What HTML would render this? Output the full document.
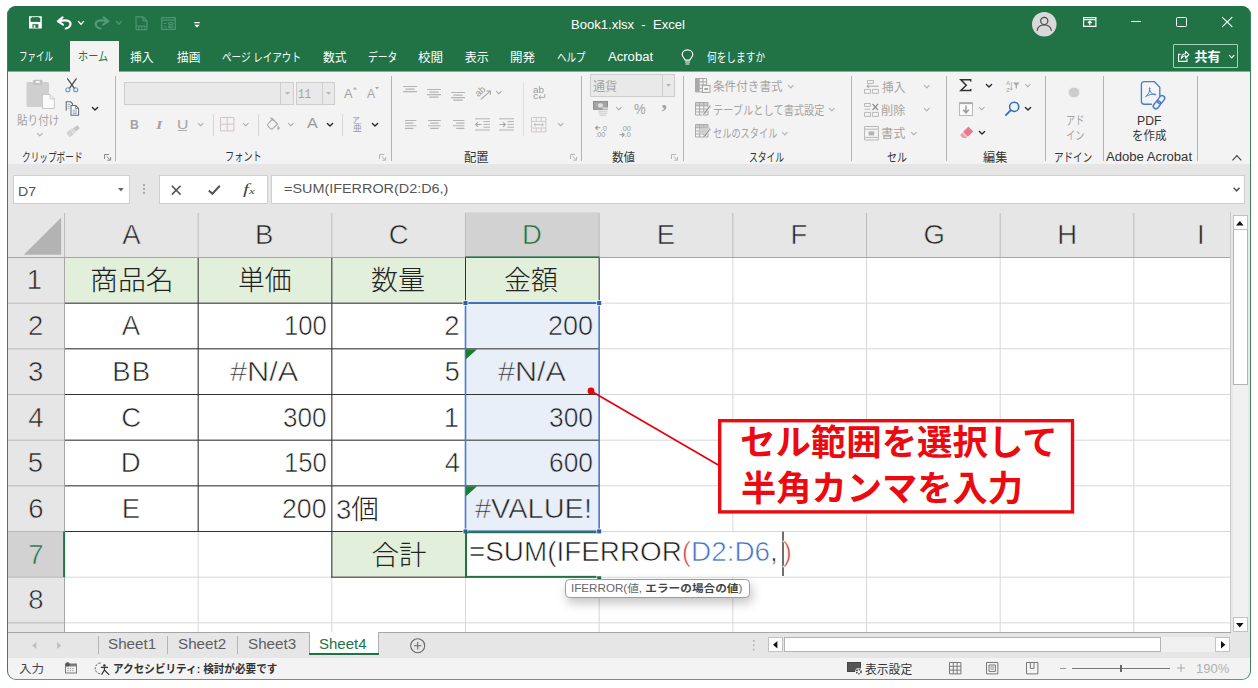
<!DOCTYPE html>
<html lang="ja">
<head>
<meta charset="utf-8">
<title>Book1.xlsx - Excel</title>
<style>
*{box-sizing:border-box;margin:0;padding:0}
html,body{width:1258px;height:688px;overflow:hidden;background:#fff}
body{position:relative;font-family:"Liberation Sans","Noto Sans CJK JP",sans-serif;color:#222}
.a{position:absolute}
#win{position:absolute;left:7px;top:6px;width:1244px;height:674px;border-radius:9px;overflow:hidden;background:#e6e6e6}
#page{position:absolute;left:-7px;top:-6px;width:1258px;height:688px}
#frame{position:absolute;left:7px;top:6px;width:1244px;height:674px;border-radius:9px;border:1px solid #3d8060;border-top-color:#217346;border-bottom-color:#5d9a86;z-index:90}
.t{position:absolute;white-space:nowrap;transform-origin:0 50%}
svg{position:absolute;overflow:visible}
.sep{position:absolute;top:76px;width:1px;height:85px;background:#b4b4b4}
.ssep{position:absolute;top:114px;width:1px;height:22px;background:#d6d6d6}
.wb{position:absolute;background:#fff;border:1px solid #cfcfcf}
.gb{position:absolute;background:#e9e9e9;border:1px solid #cdcdcd}
</style>
</head>
<body>
<div id="win"><div id="page">
<div class="a" style="left:0;top:0;width:1258px;height:71px;background:#217346"></div><svg style="left:29.3px;top:16.2px" width="12.8" height="12.8" viewBox="0 0 13.5 13"><path d="M0.8 0.8 H12.7 V12.2 H0.8 Z" fill="none" stroke="#fff" stroke-width="1.6"/><rect x="3" y="1" width="7.5" height="4.6" fill="#217346"/><rect x="0.8" y="6" width="11.9" height="6.2" fill="#fff"/><rect x="3.6" y="8.4" width="6.3" height="3.8" fill="#217346"/><rect x="4.8" y="9.6" width="2" height="2.6" fill="#fff"/></svg><svg style="left:56px;top:16px" width="16" height="14" viewBox="56 16 16 14"><path d="M62.6 17.4 L57.8 21.2 L63 24.6" fill="none" stroke="#fff" stroke-width="2.1" stroke-linecap="round" stroke-linejoin="round"/><path d="M58.4 21.2 C62 20.4 66.4 19.7 68.8 21.2 C71.8 23.2 70.8 27.6 65.7 28.5" fill="none" stroke="#fff" stroke-width="2.1" stroke-linecap="round"/></svg><svg style="left:78.2px;top:20.5px" width="6" height="4.2" viewBox="0 0 6 4.2"><path d="M0.4 0.4 L3 3.2 L5.6 0.4" fill="none" stroke="#fff" stroke-width="1.4" stroke-linecap="round" stroke-linejoin="round"/></svg><svg style="left:94px;top:16px" width="16" height="14" viewBox="94 16 16 14"><path d="M103.6 17.4 L108.4 21.2 L103.2 24.6" fill="none" stroke="#559a77" stroke-width="2.1" stroke-linecap="round" stroke-linejoin="round"/><path d="M107.8 21.2 C104.2 20.4 99.8 19.7 97.4 21.2 C94.4 23.2 95.4 27.6 100.5 28.5" fill="none" stroke="#559a77" stroke-width="2.1" stroke-linecap="round"/></svg><svg style="left:116.2px;top:20.5px" width="5.8" height="4.2" viewBox="0 0 5.8 4.2"><path d="M0.4 0.4 L2.9 3.2 L5.4 0.4" fill="none" stroke="#4d9470" stroke-width="1.4" stroke-linecap="round" stroke-linejoin="round"/></svg><svg style="left:134.5px;top:15.5px" width="13" height="15" viewBox="0 0 13 15"><path d="M1 13.5 V0.8 H8 L12 4.8 V13.5 M8 0.8 V4.8 H12" fill="none" stroke="#4d9470" stroke-width="1.2"/><path d="M1 10.2 H12 M1 13.6 H12 M3 11.9 H4.5 M6 11.9 H7.5 M9 11.9 H10.5" stroke="#4d9470" stroke-width="1.2"/></svg><svg style="left:161px;top:16.5px" width="15" height="13" viewBox="0 0 15 13"><path d="M0.7 0.7 H14.3 V12.3 H0.7 Z M0.7 3.2 H14.3" fill="none" stroke="#4d9470" stroke-width="1.3"/><path d="M7.5 5.6 H12 V7.4 H7.5 Z M7.5 9 H12 V10.6 H7.5 Z M2.8 6.5 H5.4 M2.8 9.8 H5.4" fill="none" stroke="#4d9470" stroke-width="1"/></svg><svg style="left:193.5px;top:22px" width="6" height="6" viewBox="0 0 6 6"><path d="M0.3 0.7 H5.7" stroke="#fff" stroke-width="1.3"/><path d="M0.3 2.8 H5.7 L3 5.6 Z" fill="#fff"/></svg><div class="t" style="left:571.46px;top:17.1px;font-size:12.5px;line-height:16px;color:#fff;transform:scaleX(1.044);">Book1.xlsx&nbsp; -&nbsp; Excel</div><svg style="left:1031.5px;top:11.5px" width="24.5" height="24.5" viewBox="0 0 24.5 24.5"><circle cx="12.25" cy="12.25" r="12.25" fill="#d9d9d9"/><circle cx="12.25" cy="8.9" r="3.6" fill="none" stroke="#4a4a4a" stroke-width="1.2"/><path d="M5.2 18.4 C5.8 14.4 8.6 13 12.25 13 C15.9 13 18.7 14.4 19.3 18.4" fill="none" stroke="#4a4a4a" stroke-width="1.2" stroke-linecap="round"/></svg><svg style="left:1083px;top:17.3px" width="13.5" height="10" viewBox="0 0 13.5 10"><path d="M0.6 0.6 H12.9 V9.4 H0.6 Z M0.6 2.6 H12.9" fill="none" stroke="#fff" stroke-width="1.2"/><path d="M6.75 8.2 V4.4 M4.9 6 L6.75 4.2 L8.6 6" fill="none" stroke="#fff" stroke-width="1.2"/></svg><div class="a" style="left:1130.8px;top:20.7px;width:10.4px;height:1.2px;background:#fff"></div><div class="a" style="left:1176px;top:17.3px;width:10.6px;height:10px;border:1.2px solid #fff;border-radius:1.5px"></div><svg style="left:1222px;top:17.3px" width="10.4" height="10" viewBox="0 0 10.4 10"><path d="M0.4 0.4 L10 9.6 M10 0.4 L0.4 9.6" stroke="#fff" stroke-width="1.2" stroke-linecap="round"/></svg><div class="a" style="left:69.5px;top:40.7px;width:49.7px;height:31.4px;background:#f3f3f3"></div><div class="t" style="left:19.28px;top:49.3px;font-size:12px;line-height:16px;color:#fff;transform:scaleX(0.711);">ファイル</div><div class="t" style="left:78.15px;top:49.3px;font-size:12px;line-height:16px;color:#217346;transform:scaleX(0.847);">ホーム</div><div class="t" style="left:130px;top:49.8px;font-size:12px;line-height:16px;color:#fff;transform:scaleX(0.983);">挿入</div><div class="t" style="left:177px;top:49.8px;font-size:12px;line-height:16px;color:#fff;transform:scaleX(0.971);">描画</div><div class="t" style="left:222.2px;top:49.8px;font-size:12px;line-height:16px;color:#fff;transform:scaleX(0.797);">ページ レイアウト</div><div class="t" style="left:322.5px;top:49.8px;font-size:12px;line-height:16px;color:#fff;transform:scaleX(0.979);">数式</div><div class="t" style="left:368.19px;top:49.8px;font-size:12px;line-height:16px;color:#fff;transform:scaleX(0.815);">データ</div><div class="t" style="left:418.4px;top:49.8px;font-size:12px;line-height:16px;color:#fff;transform:scaleX(1.043);">校閲</div><div class="t" style="left:464.8px;top:49.8px;font-size:12px;line-height:16px;color:#fff;">表示</div><div class="t" style="left:510.16px;top:49.8px;font-size:12px;line-height:16px;color:#fff;transform:scaleX(1.043);">開発</div><div class="t" style="left:556.81px;top:50.3px;font-size:12px;line-height:16px;color:#fff;transform:scaleX(0.791);">ヘルプ</div><div class="t" style="left:608px;top:49.3px;font-size:12px;line-height:16px;color:#fff;transform:scaleX(1.090);">Acrobat</div><div class="t" style="left:706.5px;top:49.8px;font-size:12px;line-height:16px;color:#fff;transform:scaleX(0.807);">何をしますか</div><svg style="left:681px;top:48.5px" width="13" height="16" viewBox="0 0 13 16"><path d="M4.2 11.2 C4.2 9.4 1.2 8.4 1.2 5.6 C1.2 2.8 3.6 0.8 6.5 0.8 C9.4 0.8 11.8 2.8 11.8 5.6 C11.8 8.4 8.8 9.4 8.8 11.2 Z M4.4 13 H8.6 M5 15 H8" fill="none" stroke="#fff" stroke-width="1.2" stroke-linecap="round" stroke-linejoin="round"/></svg><div class="a" style="left:1173.3px;top:44.4px;width:64.6px;height:23.8px;border:1.2px solid #a5d1b8;border-radius:1px"></div><svg style="left:1177.5px;top:50px" width="11.5" height="12" viewBox="0 0 11.5 12"><path d="M2.8 4.2 H0.6 V11.4 H9 V8.6" fill="none" stroke="#fff" stroke-width="1.1"/><path d="M3.4 8.4 C3.6 5.4 5.4 3.8 7.6 3.8 V1.4 L10.9 4.7 L7.6 8 V5.8 C5.8 5.8 4.4 6.6 3.4 8.4 Z" fill="none" stroke="#fff" stroke-width="1.1" stroke-linejoin="round"/></svg><div class="t" style="left:1194.4px;top:47.9px;font-size:13px;line-height:17px;color:#fff;font-weight:700;">共有</div><svg style="left:1228.7px;top:55px" width="5.4" height="3.8" viewBox="0 0 5.4 3.8"><path d="M0.4 0.4 L2.7 2.8 L5 0.4" fill="none" stroke="#fff" stroke-width="1.1" stroke-linecap="round" stroke-linejoin="round"/></svg><div class="a" style="left:0;top:71px;width:1258px;height:93.3px;background:#f3f3f3"></div><div class="a" style="left:0;top:71px;width:69.5px;height:1px;background:#7fae98"></div><div class="a" style="left:119.2px;top:71px;width:1140px;height:1px;background:#7fae98"></div><div class="sep" style="left:115.3px"></div><div class="sep" style="left:390.8px"></div><div class="sep" style="left:581px"></div><div class="sep" style="left:682.8px"></div><div class="sep" style="left:851.2px"></div><div class="sep" style="left:946px"></div><div class="sep" style="left:1045.2px"></div><div class="sep" style="left:1102.6px"></div><div class="sep" style="left:1196.6px"></div><svg style="left:26px;top:78.5px" width="29" height="30" viewBox="0 0 29 30"><rect x="0.5" y="3" width="22.5" height="25" rx="1.5" fill="#cfcfcf"/><rect x="7" y="0.8" width="9.5" height="5" rx="1.2" fill="#c2c2c2"/><rect x="9.8" y="2" width="4" height="2" fill="#f3f3f3"/><path d="M16.5 15.5 H24 L28.3 19.8 V29.5 H16.5 Z" fill="#fbfbfb" stroke="#c9c9c9" stroke-width="1"/><path d="M24 15.5 V19.8 H28.3" fill="none" stroke="#c9c9c9" stroke-width="1"/></svg><div class="t" style="left:17.42px;top:113px;font-size:12px;line-height:16px;color:#a3a3a3;transform:scaleX(0.885);">貼り付け</div><svg style="left:37.4px;top:132.6px" width="5.8" height="3.8" viewBox="0 0 5.8 3.8"><path d="M0.4 0.4 L2.9 2.8 L5.4 0.4" fill="none" stroke="#b0b0b0" stroke-width="1.1" stroke-linecap="round" stroke-linejoin="round"/></svg><svg style="left:65px;top:78px" width="14" height="15" viewBox="65 78 14 15"><path d="M67.6 78.8 L74.6 88.6 M76.2 78.8 L69.2 88.6" stroke="#4a4a4a" stroke-width="1.25" stroke-linecap="round"/><circle cx="67.9" cy="89.7" r="2" fill="none" stroke="#6e96d2" stroke-width="1.15"/><circle cx="75.7" cy="89.7" r="2" fill="none" stroke="#6e96d2" stroke-width="1.15"/></svg><svg style="left:65px;top:100.6px" width="15" height="15.4" viewBox="65 100.6 15 15.4"><path d="M66.2 110.4 V101.4 H70.6 L72.6 103.4 V104.6" fill="none" stroke="#6a6a6a" stroke-width="1.05"/><path d="M67.6 104 H70.2 M67.6 106 H69.4 M67.6 108 H69.4" stroke="#86a6d0" stroke-width="0.9"/><path d="M71 105.2 H75.8 L78.6 108 V114.8 H71 Z" fill="#fdfdfd" stroke="#6a6a6a" stroke-width="1.05"/><path d="M75.6 105.4 V108.2 H78.4" fill="none" stroke="#6a6a6a" stroke-width="0.8"/><path d="M72.6 109.8 H77 M72.6 111.6 H77 M72.6 113.2 H77" stroke="#86a6d0" stroke-width="0.9"/></svg><svg style="left:92px;top:106.5px" width="6" height="4" viewBox="0 0 6 4"><path d="M0.4 0.4 L3 3 L5.6 0.4" fill="none" stroke="#2b2b2b" stroke-width="1.4" stroke-linecap="round" stroke-linejoin="round"/></svg><svg style="left:66px;top:125px" width="14" height="12.4" viewBox="66 125 14 12.4"><g transform="rotate(-38 73 131)"><rect x="74.6" y="129" width="5.4" height="4" rx="0.6" fill="#c6c6c6"/><rect x="72.6" y="128.2" width="1.6" height="5.6" fill="#d0d0d0"/><path d="M72 128 H67.2 C66.4 129.6 66 132 66.8 134 H72 Z" fill="#d6d2d4"/></g></svg><div class="t" style="left:22.18px;top:149.6px;font-size:12px;line-height:16px;color:#333;transform:scaleX(0.721);">クリップボード</div><svg style="left:103.8px;top:153.6px" width="7.6" height="7" viewBox="0 0 7.6 7"><path d="M0.5 5 V0.5 H5.2" fill="none" stroke="#8a8a8a" stroke-width="1"/><path d="M2.6 2.4 L6.2 5.8 M6.6 3 V6.2 H3.2" fill="none" stroke="#8a8a8a" stroke-width="1"/></svg><div class="gb" style="left:124px;top:82px;width:170px;height:22.6px"></div><div class="a" style="left:280.4px;top:83px;width:1px;height:20.6px;background:#cdcdcd"></div><svg style="left:284.6px;top:92px" width="5" height="3" viewBox="0 0 5 3"><path d="M0 0 H5 L2.5 2.8 Z" fill="#b5b5b5"/></svg><div class="gb" style="left:295.8px;top:82px;width:39px;height:22.6px"></div><div class="a" style="left:321.8px;top:83px;width:1px;height:20.6px;background:#cdcdcd"></div><svg style="left:326px;top:92px" width="5" height="3" viewBox="0 0 5 3"><path d="M0 0 H5 L2.5 2.8 Z" fill="#b5b5b5"/></svg><div class="t" style="left:298.29px;top:87.1px;font-size:12px;line-height:16px;color:#a3a3a3;transform:scaleX(0.908);font-family:&quot;Liberation Mono&quot;,monospace;">11</div><div class="t" style="left:344px;top:84.9px;font-size:13.5px;line-height:18px;color:#a3a3a3;transform:scaleX(0.956);">A</div><svg style="left:352.6px;top:86.6px" width="4" height="2.6" viewBox="0 0 4 2.6"><path d="M0 2.6 L2 0 L4 2.6 Z" fill="#a9a9a9"/></svg><div class="t" style="left:367.4px;top:86.3px;font-size:12.5px;line-height:16px;color:#a3a3a3;transform:scaleX(0.975);">A</div><svg style="left:375px;top:86.6px" width="4" height="2.6" viewBox="0 0 4 2.6"><path d="M0 0 L2 2.6 L4 0 Z" fill="#a9a9a9"/></svg><div class="t" style="left:129.56px;top:116.1px;font-size:13px;line-height:17px;color:#a3a3a3;font-weight:700;transform:scaleX(0.938);">B</div><div class="t" style="left:156px;top:115.6px;font-size:13px;line-height:17px;color:#a3a3a3;font-weight:700;transform:scaleX(1.260);font-style:italic;font-family:&quot;Liberation Serif&quot;,serif;">I</div><div class="t" style="left:176.94px;top:116.7px;font-size:12.5px;line-height:16px;color:#a3a3a3;transform:scaleX(1.257);">U</div><div class="a" style="left:178px;top:130px;width:9.2px;height:1px;background:#a9a9a9"></div><svg style="left:198.4px;top:123.4px" width="5.6" height="3.8" viewBox="0 0 5.6 3.8"><path d="M0.4 0.4 L2.8 2.8 L5.2 0.4" fill="none" stroke="#b0b0b0" stroke-width="1.1" stroke-linecap="round" stroke-linejoin="round"/></svg><div class="ssep" style="left:213px"></div><svg style="left:220.3px;top:116.5px" width="14.4" height="14.4" viewBox="0 0 14.4 14.4"><path d="M0.5 0.5 H13.9 V13.9 H0.5 Z M7.2 0.5 V13.9 M0.5 7.2 H13.9" fill="none" stroke="#d0c4c8" stroke-width="1"/></svg><svg style="left:243px;top:123.4px" width="5.6" height="3.8" viewBox="0 0 5.6 3.8"><path d="M0.4 0.4 L2.8 2.8 L5.2 0.4" fill="none" stroke="#b0b0b0" stroke-width="1.1" stroke-linecap="round" stroke-linejoin="round"/></svg><div class="ssep" style="left:257.5px"></div><svg style="left:267px;top:116.5px" width="13.5" height="14" viewBox="0 0 13.5 14"><path d="M4.6 1 L10.6 7 L6 11.4 C5.2 12.2 4 12.2 3.2 11.4 L1.2 9.4 C0.4 8.6 0.4 7.4 1.2 6.6 L5.6 2.2 M3.4 0.6 L6.4 3.6" fill="none" stroke="#a9a9a9" stroke-width="1.1" stroke-linejoin="round"/><path d="M11.4 8.6 C12.2 9.8 12.8 10.6 12.8 11.4 C12.8 12.2 12.2 12.8 11.4 12.8 C10.6 12.8 10 12.2 10 11.4 C10 10.6 10.6 9.8 11.4 8.6 Z" fill="#b9b9b9"/></svg><svg style="left:288px;top:123.4px" width="5.6" height="3.8" viewBox="0 0 5.6 3.8"><path d="M0.4 0.4 L2.8 2.8 L5.2 0.4" fill="none" stroke="#b0b0b0" stroke-width="1.1" stroke-linecap="round" stroke-linejoin="round"/></svg><div class="t" style="left:306.6px;top:113px;font-size:15.5px;line-height:20px;color:#9a9a9a;transform:scaleX(1.040);">A</div><svg style="left:326.6px;top:123px" width="6" height="4" viewBox="0 0 6 4"><path d="M0.4 0.4 L3 3 L5.6 0.4" fill="none" stroke="#2b2b2b" stroke-width="1.4" stroke-linecap="round" stroke-linejoin="round"/></svg><div class="ssep" style="left:341.5px"></div><div class="t" style="left:352.47px;top:115.4px;font-size:7px;line-height:9px;color:#8f8f8f;transform:scaleX(1.133);">ア</div><div class="t" style="left:352.6px;top:122.3px;font-size:9px;line-height:12px;color:#9a9a9a;transform:scaleX(0.978);">亜</div><svg style="left:371.8px;top:123px" width="6" height="4" viewBox="0 0 6 4"><path d="M0.4 0.4 L3 3 L5.6 0.4" fill="none" stroke="#2b2b2b" stroke-width="1.4" stroke-linecap="round" stroke-linejoin="round"/></svg><div class="t" style="left:225.47px;top:149.1px;font-size:12px;line-height:16px;color:#333;transform:scaleX(0.766);">フォント</div><svg style="left:379.4px;top:153.6px" width="7.6" height="7" viewBox="0 0 7.6 7"><path d="M0.5 5 V0.5 H5.2" fill="none" stroke="#b5b5b5" stroke-width="1"/><path d="M2.6 2.4 L6.2 5.8 M6.6 3 V6.2 H3.2" fill="none" stroke="#b5b5b5" stroke-width="1"/></svg><svg style="left:403.4px;top:85.8px" width="16" height="16" viewBox="0 0 16 16"><path d="M0 0.5 H14" stroke="#b4b4b4" stroke-width="1.15"/><path d="M2.4 3.05 H11.6" stroke="#b4b4b4" stroke-width="1.15"/><path d="M0 5.6 H14" stroke="#b4b4b4" stroke-width="1.15"/></svg><svg style="left:427.4px;top:88.8px" width="16" height="16" viewBox="0 0 16 16"><path d="M0 0.5 H14" stroke="#b4b4b4" stroke-width="1.15"/><path d="M2.4 3.05 H11.6" stroke="#b4b4b4" stroke-width="1.15"/><path d="M0 5.6 H14" stroke="#b4b4b4" stroke-width="1.15"/><path d="M2.4 8.15 H11.6" stroke="#b4b4b4" stroke-width="1.15"/></svg><svg style="left:451.4px;top:91.8px" width="16" height="16" viewBox="0 0 16 16"><path d="M0 0.5 H14" stroke="#b4b4b4" stroke-width="1.15"/><path d="M2.4 3.05 H11.6" stroke="#b4b4b4" stroke-width="1.15"/><path d="M0 5.6 H14" stroke="#b4b4b4" stroke-width="1.15"/><path d="M2.4 8.15 H11.6" stroke="#b4b4b4" stroke-width="1.15"/></svg><svg style="left:474px;top:84px" width="18" height="17" viewBox="474 84 18 17"><text x="480.2" y="94.4" text-anchor="middle" font-size="9.6" fill="#9c9c9c" transform="rotate(-42 480.2 91.4)" font-family="Liberation Sans,sans-serif">ab</text><path d="M480.8 99.4 L490 91.4 M486.6 91 H490.4 V94.8" fill="none" stroke="#a4a4a4" stroke-width="1.1"/></svg><svg style="left:496px;top:90.6px" width="5.6" height="3.8" viewBox="0 0 5.6 3.8"><path d="M0.4 0.4 L2.8 2.8 L5.2 0.4" fill="none" stroke="#b0b0b0" stroke-width="1.1" stroke-linecap="round" stroke-linejoin="round"/></svg><div class="a" style="left:522.6px;top:81.6px;width:1px;height:54px;background:#dedede"></div><div class="t" style="left:532.6px;top:84.1px;font-size:9px;line-height:12px;color:#9a9a9a;transform:scaleX(1.100);">ab</div><div class="t" style="left:532.8px;top:89.9px;font-size:9px;line-height:12px;color:#9a9a9a;transform:scaleX(1.150);">c</div><svg style="left:538px;top:93.5px" width="7.4" height="6" viewBox="0 0 7.4 6"><path d="M6.8 0 V3.4 H1 M3 1.4 L0.8 3.4 L3 5.4" fill="none" stroke="#a9a9a9" stroke-width="1"/></svg><svg style="left:404.6px;top:120.1px" width="16" height="16" viewBox="0 0 16 16"><path d="M0 0.5 H11.4" stroke="#b4b4b4" stroke-width="1.15"/><path d="M0 3.1 H8.4" stroke="#b4b4b4" stroke-width="1.15"/><path d="M0 5.7 H11.4" stroke="#b4b4b4" stroke-width="1.15"/><path d="M0 8.3 H8.4" stroke="#b4b4b4" stroke-width="1.15"/></svg><svg style="left:428px;top:120.1px" width="16" height="16" viewBox="0 0 16 16"><path d="M0 0.5 H12.8" stroke="#b4b4b4" stroke-width="1.15"/><path d="M2.2 3.1 H10.6" stroke="#b4b4b4" stroke-width="1.15"/><path d="M0 5.7 H12.8" stroke="#b4b4b4" stroke-width="1.15"/><path d="M2.2 8.3 H10.6" stroke="#b4b4b4" stroke-width="1.15"/></svg><svg style="left:453px;top:120.1px" width="16" height="16" viewBox="0 0 16 16"><path d="M0 0.5 H11.4" stroke="#b4b4b4" stroke-width="1.15"/><path d="M3.2 3.1 H11.4" stroke="#b4b4b4" stroke-width="1.15"/><path d="M0 5.7 H11.4" stroke="#b4b4b4" stroke-width="1.15"/><path d="M3.2 8.3 H11.4" stroke="#b4b4b4" stroke-width="1.15"/></svg><svg style="left:475.4px;top:118px" width="15.4" height="13" viewBox="0 0 15.4 13"><path d="M0 0.8 H15 M8.4 3.6 H15 M8.4 6.4 H15 M8.4 9.2 H15 M0 12 H15" stroke="#b4b4b4" stroke-width="1"/><path d="M6.6 6.5 H0.8 M3 4.2 L0.6 6.5 L3 8.8" fill="none" stroke="#a9a9a9" stroke-width="1.1"/></svg><svg style="left:499.4px;top:118px" width="15.4" height="13" viewBox="0 0 15.4 13"><path d="M0 0.8 H15 M8.4 3.6 H15 M8.4 6.4 H15 M8.4 9.2 H15 M0 12 H15" stroke="#b4b4b4" stroke-width="1"/><path d="M0.4 6.5 H6.2 M4 4.2 L6.4 6.5 L4 8.8" fill="none" stroke="#a9a9a9" stroke-width="1.1"/></svg><svg style="left:530.6px;top:116.5px" width="15.4" height="15.4" viewBox="0 0 15.4 15.4"><path d="M0.5 0.5 H14.9 V14.9 H0.5 Z M0.5 4.4 H14.9 M0.5 11 H14.9 M5.2 0.5 V4.4 M10.2 0.5 V4.4 M5.2 11 V14.9 M10.2 11 V14.9" fill="none" stroke="#d3c7ca" stroke-width="1"/><path d="M3 7.7 H12.4 M4.6 6.2 L3 7.7 L4.6 9.2 M10.8 6.2 L12.4 7.7 L10.8 9.2" fill="none" stroke="#b9b9b9" stroke-width="1"/></svg><svg style="left:558.4px;top:123.4px" width="5.6" height="3.8" viewBox="0 0 5.6 3.8"><path d="M0.4 0.4 L2.8 2.8 L5.2 0.4" fill="none" stroke="#b0b0b0" stroke-width="1.1" stroke-linecap="round" stroke-linejoin="round"/></svg><div class="t" style="left:463.97px;top:149.6px;font-size:12px;line-height:16px;color:#333;transform:scaleX(1.026);">配置</div><svg style="left:570.2px;top:153.6px" width="7.6" height="7" viewBox="0 0 7.6 7"><path d="M0.5 5 V0.5 H5.2" fill="none" stroke="#b5b5b5" stroke-width="1"/><path d="M2.6 2.4 L6.2 5.8 M6.6 3 V6.2 H3.2" fill="none" stroke="#b5b5b5" stroke-width="1"/></svg><div class="gb" style="left:590.4px;top:74px;width:84.8px;height:22.8px"></div><div class="a" style="left:662px;top:75px;width:1px;height:20.8px;background:#cdcdcd"></div><svg style="left:666.2px;top:84.4px" width="5" height="3" viewBox="0 0 5 3"><path d="M0 0 H5 L2.5 2.8 Z" fill="#b5b5b5"/></svg><div class="t" style="left:592.6px;top:79.2px;font-size:12px;line-height:16px;color:#a3a3a3;transform:scaleX(1.009);">通貨</div><svg style="left:593px;top:101.2px" width="15.4" height="15" viewBox="0 0 15.4 15"><rect x="0.5" y="0.5" width="14" height="7.8" fill="#a4a4a4" stroke="#8e8e8e"/><ellipse cx="7.4" cy="4.4" rx="2.6" ry="2.2" fill="#dedede"/><rect x="9.4" y="6.2" width="5.6" height="2.4" fill="#cfcfcf"/><path d="M5.4 10.2 H14.4 M5.4 12.2 H14.4 M6.4 14.2 H13.4" stroke="#c9c9c9" stroke-width="1"/></svg><svg style="left:616px;top:107.4px" width="5.6" height="3.8" viewBox="0 0 5.6 3.8"><path d="M0.4 0.4 L2.8 2.8 L5.2 0.4" fill="none" stroke="#b0b0b0" stroke-width="1.1" stroke-linecap="round" stroke-linejoin="round"/></svg><div class="t" style="left:634px;top:99.6px;font-size:14.5px;line-height:19px;color:#a3a3a3;transform:scaleX(0.908);">%</div><div class="t" style="left:661.4px;top:86px;font-size:22px;line-height:29px;color:#a3a3a3;font-weight:700;font-family:&quot;Liberation Serif&quot;,serif;">,</div><svg style="left:594.6px;top:125.4px" width="13" height="12.4" viewBox="0 0 13 12.4"><path d="M5.2 2.8 H0.8 M2.6 0.8 L0.6 2.8 L2.6 4.8" fill="none" stroke="#9a9a9a" stroke-width="1.1"/><text x="5.6" y="5.6" font-size="7.4" fill="#9a9a9a" font-family="Liberation Sans,sans-serif">.0</text><text x="0.2" y="12.4" font-size="7.4" fill="#9a9a9a" font-family="Liberation Sans,sans-serif">.00</text></svg><svg style="left:619px;top:125.4px" width="13" height="12.4" viewBox="0 0 13 12.4"><text x="1.6" y="5.6" font-size="7.4" fill="#9a9a9a" font-family="Liberation Sans,sans-serif">.00</text><path d="M0.4 9.8 H5 M3.2 7.8 L5.2 9.8 L3.2 11.8" fill="none" stroke="#9a9a9a" stroke-width="1.1"/><text x="5.8" y="12.4" font-size="7.4" fill="#9a9a9a" font-family="Liberation Sans,sans-serif">.0</text></svg><div class="t" style="left:612px;top:149.6px;font-size:12px;line-height:16px;color:#333;transform:scaleX(0.954);">数値</div><svg style="left:671.4px;top:153.6px" width="7.6" height="7" viewBox="0 0 7.6 7"><path d="M0.5 5 V0.5 H5.2" fill="none" stroke="#b5b5b5" stroke-width="1"/><path d="M2.6 2.4 L6.2 5.8 M6.6 3 V6.2 H3.2" fill="none" stroke="#b5b5b5" stroke-width="1"/></svg><svg style="left:695.4px;top:78.2px" width="15.4" height="15" viewBox="0 0 15.4 15"><rect x="0.5" y="0.5" width="3.6" height="13.4" fill="#a9a9a9"/><path d="M0.5 0.5 H11.6 V13.9 H0.5 Z M0.5 3.8 H11.6 M0.5 7 H11.6 M0.5 10.4 H11.6 M4.2 0.5 V13.9 M8 0.5 V13.9" fill="none" stroke="#a9a9a9" stroke-width="1"/><rect x="7.4" y="7.4" width="7.6" height="7" fill="#f6f6f6" stroke="#a0a0a0"/><path d="M9.4 11 H13" stroke="#8a8a8a" stroke-width="1.4"/></svg><div class="t" style="left:712.73px;top:79.2px;font-size:12px;line-height:16px;color:#a3a3a3;transform:scaleX(0.968);">条件付き書式</div><svg style="left:787.6px;top:84.8px" width="5.6" height="3.8" viewBox="0 0 5.6 3.8"><path d="M0.4 0.4 L2.8 2.8 L5.2 0.4" fill="none" stroke="#b0b0b0" stroke-width="1.1" stroke-linecap="round" stroke-linejoin="round"/></svg><svg style="left:695.4px;top:102.2px" width="16" height="15" viewBox="0 0 16 15"><rect x="0.5" y="0.5" width="12.5" height="3.2" fill="#c9c9c9"/><path d="M0.5 0.5 H13 V13 H0.5 Z M0.5 3.8 H13 M0.5 7 H13 M0.5 10 H13 M4.6 0.5 V13 M8.8 0.5 V13" fill="none" stroke="#a9a9a9" stroke-width="1"/><path d="M15 2.6 L9 10 L6.4 14.4 L10.6 11.6 L16 4.2 Z" fill="#9a9a9a" stroke="#f3f3f3" stroke-width="0.7"/></svg><div class="t" style="left:712.85px;top:102.6px;font-size:12px;line-height:16px;color:#a3a3a3;transform:scaleX(0.852);">テーブルとして書式設定</div><svg style="left:829px;top:108.2px" width="5.6" height="3.8" viewBox="0 0 5.6 3.8"><path d="M0.4 0.4 L2.8 2.8 L5.2 0.4" fill="none" stroke="#b0b0b0" stroke-width="1.1" stroke-linecap="round" stroke-linejoin="round"/></svg><svg style="left:695.4px;top:124px" width="16" height="15.4" viewBox="0 0 16 15.4"><rect x="0.5" y="0.5" width="12.5" height="3.2" fill="#c9c9c9"/><path d="M0.5 0.5 H13 V13 H0.5 Z M0.5 3.8 H13 M0.5 7 H13 M0.5 10 H13 M4.6 0.5 V13 M8.8 0.5 V13" fill="none" stroke="#a9a9a9" stroke-width="1"/><rect x="4.6" y="3.8" width="8.4" height="6.2" fill="#cfcfcf"/><path d="M15 3.6 L9 11 L6 15.2 L10.6 12.6 L16 5.2 Z" fill="#9a9a9a" stroke="#f3f3f3" stroke-width="0.7"/></svg><div class="t" style="left:712.93px;top:126px;font-size:12px;line-height:16px;color:#a3a3a3;transform:scaleX(0.766);">セルのスタイル</div><svg style="left:782.2px;top:131.6px" width="5.6" height="3.8" viewBox="0 0 5.6 3.8"><path d="M0.4 0.4 L2.8 2.8 L5.2 0.4" fill="none" stroke="#b0b0b0" stroke-width="1.1" stroke-linecap="round" stroke-linejoin="round"/></svg><div class="t" style="left:748.57px;top:149.6px;font-size:12px;line-height:16px;color:#333;transform:scaleX(0.732);">スタイル</div><svg style="left:863.6px;top:79.6px" width="15" height="14" viewBox="0 0 15 14"><path d="M3.4 0.5 H9.4 V3.4 H3.4 Z M0.5 9.4 H6.4 V13.4 H0.5 Z M8.4 9.4 H14.4 V13.4 H8.4 Z" fill="none" stroke="#b9b9b9" stroke-width="1"/><path d="M14.6 6.2 H3 M5 4.4 L2.8 6.2 L5 8" fill="none" stroke="#a9a9a9" stroke-width="1"/></svg><div class="t" style="left:882.4px;top:79.6px;font-size:12px;line-height:16px;color:#a3a3a3;transform:scaleX(0.975);">挿入</div><svg style="left:923.8px;top:85.2px" width="5.6" height="3.8" viewBox="0 0 5.6 3.8"><path d="M0.4 0.4 L2.8 2.8 L5.2 0.4" fill="none" stroke="#b0b0b0" stroke-width="1.1" stroke-linecap="round" stroke-linejoin="round"/></svg><svg style="left:863.6px;top:102.6px" width="15" height="14" viewBox="0 0 15 14"><path d="M0.5 0.5 H6.4 V3.4 H0.5 Z M0.5 9.4 H6.4 V13.4 H0.5 Z M8.4 9.4 H14.4 V13.4 H8.4 Z M0.5 6.2 H6.4" fill="none" stroke="#b9b9b9" stroke-width="1"/><path d="M8.6 1 L14 7 M14 1 L8.6 7" stroke="#8f8f8f" stroke-width="1.2"/></svg><div class="t" style="left:881.38px;top:102.6px;font-size:12px;line-height:16px;color:#a3a3a3;transform:scaleX(1.017);">削除</div><svg style="left:923.8px;top:108.2px" width="5.6" height="3.8" viewBox="0 0 5.6 3.8"><path d="M0.4 0.4 L2.8 2.8 L5.2 0.4" fill="none" stroke="#b0b0b0" stroke-width="1.1" stroke-linecap="round" stroke-linejoin="round"/></svg><svg style="left:863.6px;top:125.6px" width="15" height="14.6" viewBox="0 0 15 14.6"><path d="M0.5 0.5 H14.4 M0.5 14 H14.4 M0.5 3.2 H14.4 V11.4 H0.5 Z M0.5 0.5 V3 M14.4 0.5 V3 M0.5 11.6 V14 M14.4 11.6 V14" fill="none" stroke="#b9b9b9" stroke-width="1"/><rect x="4.6" y="5.4" width="5.6" height="4" fill="#b3b3b3"/></svg><div class="t" style="left:881.38px;top:126px;font-size:12px;line-height:16px;color:#a3a3a3;transform:scaleX(1.017);">書式</div><svg style="left:910.8px;top:131.6px" width="5.6" height="3.8" viewBox="0 0 5.6 3.8"><path d="M0.4 0.4 L2.8 2.8 L5.2 0.4" fill="none" stroke="#b0b0b0" stroke-width="1.1" stroke-linecap="round" stroke-linejoin="round"/></svg><div class="t" style="left:887.47px;top:149.6px;font-size:12px;line-height:16px;color:#333;transform:scaleX(0.830);">セル</div><svg style="left:960px;top:79.2px" width="11.6" height="12.4" viewBox="0 0 13 13.6"><path d="M12 2.6 V0.8 H1 L7 6.8 L1 12.8 H12 V11" fill="none" stroke="#333" stroke-width="1.7" stroke-linejoin="miter"/></svg><svg style="left:985.6px;top:84.4px" width="6" height="4" viewBox="0 0 6 4"><path d="M0.4 0.4 L3 3 L5.6 0.4" fill="none" stroke="#2b2b2b" stroke-width="1.4" stroke-linecap="round" stroke-linejoin="round"/></svg><svg style="left:1005.6px;top:80px" width="14" height="12" viewBox="0 0 14 12"><text x="0" y="5.4" font-size="6" fill="#a3a3a3" font-family="Liberation Sans,sans-serif">A</text><text x="0.2" y="11.8" font-size="6" fill="#a3a3a3" font-family="Liberation Sans,sans-serif">Z</text><path d="M5.4 2.2 V10 M4.2 8.6 L5.4 10.2 L6.6 8.6" fill="none" stroke="#a9a9a9" stroke-width="0.8"/><path d="M7 2.4 H13.6 L11 5.6 V8.8 L9.6 8 V5.6 Z" fill="#a9a9a9"/></svg><svg style="left:1025px;top:84.4px" width="5.6" height="3.8" viewBox="0 0 5.6 3.8"><path d="M0.4 0.4 L2.8 2.8 L5.2 0.4" fill="none" stroke="#b0b0b0" stroke-width="1.1" stroke-linecap="round" stroke-linejoin="round"/></svg><svg style="left:958.8px;top:102px" width="14" height="14" viewBox="0 0 14 14"><rect x="0.5" y="0.5" width="13" height="13" fill="#fafafa" stroke="#b9b9b9"/><rect x="0.5" y="0.5" width="13" height="1.6" fill="#a9a9a9"/><path d="M7 3.6 V10.6 M4.2 7.8 L7 10.8 L9.8 7.8" fill="none" stroke="#a09aa0" stroke-width="1.5"/></svg><svg style="left:978.8px;top:107.4px" width="5.6" height="3.8" viewBox="0 0 5.6 3.8"><path d="M0.4 0.4 L2.8 2.8 L5.2 0.4" fill="none" stroke="#b0b0b0" stroke-width="1.1" stroke-linecap="round" stroke-linejoin="round"/></svg><svg style="left:1005px;top:101.4px" width="15" height="15" viewBox="0 0 15 15"><circle cx="9.2" cy="5.8" r="4.6" fill="none" stroke="#2f6fc0" stroke-width="1.5"/><path d="M5.8 9.2 L0.9 14.1" stroke="#2f6fc0" stroke-width="1.8" stroke-linecap="round"/></svg><svg style="left:1025px;top:107.4px" width="6" height="4" viewBox="0 0 6 4"><path d="M0.4 0.4 L3 3 L5.6 0.4" fill="none" stroke="#2b2b2b" stroke-width="1.4" stroke-linecap="round" stroke-linejoin="round"/></svg><svg style="left:959.6px;top:125.6px" width="14" height="12.4" viewBox="0 0 14 12.4"><path d="M8.4 0.6 L13.2 5.4 L7.8 10.8 L3 6 Z" fill="#e9788a"/><path d="M2.4 6.6 L7.2 11.4 L6.4 12 H2.8 L0.6 9.8 C0.2 9.4 0.2 8.8 0.6 8.4 Z" fill="#f0a0ac"/></svg><svg style="left:978.8px;top:130.6px" width="6" height="4" viewBox="0 0 6 4"><path d="M0.4 0.4 L3 3 L5.6 0.4" fill="none" stroke="#2b2b2b" stroke-width="1.4" stroke-linecap="round" stroke-linejoin="round"/></svg><div class="t" style="left:983px;top:149.6px;font-size:12px;line-height:16px;color:#333;transform:scaleX(1.012);">編集</div><div class="a" style="left:1069.2px;top:87.6px;width:9.6px;height:9.6px;border-radius:50%;background:#cbcbcb;box-shadow:0 0 2px #cbcbcb"></div><div class="t" style="left:1065.94px;top:113px;font-size:12px;line-height:16px;color:#a3a3a3;transform:scaleX(0.764);">アド</div><div class="t" style="left:1065.94px;top:127.6px;font-size:12px;line-height:16px;color:#a3a3a3;transform:scaleX(0.764);">イン</div><div class="t" style="left:1054.2px;top:149.6px;font-size:12px;line-height:16px;color:#333;transform:scaleX(0.796);">アドイン</div><svg style="left:1138px;top:79px" width="32" height="32" viewBox="1138 79 32 32"><path d="M1159.8 96.4 V87.2 L1154.2 81.6 H1144.4 C1142.6 81.6 1141.4 82.8 1141.4 84.6 V101.2 C1141.4 103 1142.6 104.2 1144.4 104.2 H1151.4" fill="none" stroke="#4a7cd0" stroke-width="1.35" stroke-linejoin="round" stroke-linecap="round"/><path d="M1145.6 96.6 C1148 95 1149.8 91.6 1150 88.4 C1150 87.4 1149 87.4 1149.2 88.6 C1149.6 91.6 1152 94.4 1155.2 95 C1156.2 95.2 1156.2 94 1155 94 C1151.6 94 1148 95 1145.6 96.6 Z" fill="none" stroke="#4a7cd0" stroke-width="0.95" stroke-linejoin="round"/><g fill="none" stroke="#4a7cd0" stroke-width="1.5" transform="rotate(-52 1159 102.2)"><rect x="1151.4" y="99.6" width="8.6" height="5.2" rx="2.6"/><rect x="1158" y="99.6" width="8.6" height="5.2" rx="2.6"/></g></svg><div class="t" style="left:1137.03px;top:112.5px;font-size:12.5px;line-height:16px;color:#333;transform:scaleX(0.975);">PDF</div><div class="t" style="left:1131.84px;top:127.6px;font-size:12px;line-height:16px;color:#333;transform:scaleX(0.957);">を作成</div><div class="t" style="left:1106.2px;top:149.1px;font-size:12.5px;line-height:16px;color:#333;transform:scaleX(1.049);">Adobe Acrobat</div><svg style="left:1231.7px;top:155.2px" width="9.8" height="5.8" viewBox="0 0 9.8 5.8"><path d="M0.5 5.3 L4.9 0.7 L9.3 5.3" fill="none" stroke="#444" stroke-width="1.2"/></svg><div class="a" style="left:0;top:164.3px;width:1258px;height:48px;background:#e6e6e6"></div><div class="wb" style="left:12.8px;top:175.2px;width:116.8px;height:28.4px"></div><div class="t" style="left:17.87px;top:183.7px;font-size:12.5px;line-height:16px;color:#555;transform:scaleX(1.133);">D7</div><svg style="left:117.6px;top:187.8px" width="5.8" height="3.4" viewBox="0 0 5.4 3.2"><path d="M0 0 H5.4 L2.7 3.2 Z" fill="#666"/></svg><svg style="left:143.2px;top:183.8px" width="2.4" height="12" viewBox="0 0 2.4 12"><g fill="#a8a8a8"><rect x="0" y="0" width="2" height="2"/><rect x="0" y="3.9" width="2" height="2"/><rect x="0" y="7.8" width="2" height="2"/></g></svg><div class="wb" style="left:159.2px;top:175.2px;width:108.8px;height:28.4px"></div><svg style="left:171px;top:184.6px" width="10.4" height="10.4" viewBox="0 0 10.4 10.4"><path d="M0.8 0.8 L9.6 9.6 M9.6 0.8 L0.8 9.6" stroke="#555" stroke-width="1.6"/></svg><svg style="left:207.6px;top:185px" width="12.6" height="10" viewBox="0 0 12.6 10"><path d="M0.8 5.4 L4.4 8.8 L11.8 0.8" fill="none" stroke="#555" stroke-width="2"/></svg><div class="t" style="left:243.2px;top:181.2px;font-size:14px;line-height:18px;color:#444;transform:scaleX(1.525);font-family:&quot;Liberation Serif&quot;,serif;font-style:italic;"><i>f</i><span style="font-size:8.5px">x</span></div><div class="wb" style="left:270.8px;top:175.2px;width:974.4px;height:28.4px"></div><div class="t" style="left:284px;top:181.4px;font-size:12.5px;line-height:16px;color:#555;transform:scaleX(1.152);">=SUM(IFERROR(D2:D6,)</div><svg style="left:1233.4px;top:186.8px" width="7.2" height="4.6" viewBox="0 0 7.2 4.6"><path d="M0.7 0.7 L3.6 3.8 L6.5 0.7" fill="none" stroke="#555" stroke-width="1.5"/></svg><div class="a" style="left:8px;top:212px;width:1222px;height:420.2px;background:#fff"></div><svg style="left:0;top:0" width="1258" height="688" viewBox="0 0 1258 688"><rect x="7" y="212" width="1244" height="45.5" fill="#e6e6e6"/><rect x="7" y="257" width="57.5" height="375.5" fill="#e6e6e6"/><rect x="465.5" y="212.4" width="133.67" height="44.8" fill="#d2d2d2"/><rect x="8" y="531.5" width="56.5" height="45.67" fill="#d2d2d2"/><path d="M61.2 217.6 V254.8 H23.8 Z" fill="#b3b3b3"/><rect x="64.5" y="257.5" width="534.67" height="45.67" fill="#e2efda"/><rect x="331.83" y="531.5" width="133.67" height="45.67" fill="#e2efda"/><rect x="465.5" y="303.17" width="133.67" height="228.33" fill="#e9eff9"/><rect x="197.67" y="257.5" width="1" height="374.8" fill="#d8d8d8"/><rect x="331.33" y="257.5" width="1" height="374.8" fill="#d8d8d8"/><rect x="465" y="257.5" width="1" height="374.8" fill="#d8d8d8"/><rect x="598.67" y="257.5" width="1" height="374.8" fill="#d8d8d8"/><rect x="732.34" y="257.5" width="1" height="374.8" fill="#d8d8d8"/><rect x="866" y="257.5" width="1" height="374.8" fill="#d8d8d8"/><rect x="999.67" y="257.5" width="1" height="374.8" fill="#d8d8d8"/><rect x="1133.34" y="257.5" width="1" height="374.8" fill="#d8d8d8"/><rect x="65" y="302.67" width="1165.2" height="1" fill="#d8d8d8"/><rect x="65" y="348.33" width="1165.2" height="1" fill="#d8d8d8"/><rect x="65" y="394" width="1165.2" height="1" fill="#d8d8d8"/><rect x="65" y="439.67" width="1165.2" height="1" fill="#d8d8d8"/><rect x="65" y="485.34" width="1165.2" height="1" fill="#d8d8d8"/><rect x="65" y="531" width="1165.2" height="1" fill="#d8d8d8"/><rect x="65" y="576.67" width="1165.2" height="1" fill="#d8d8d8"/><rect x="65" y="622.34" width="1165.2" height="1" fill="#d8d8d8"/><rect x="64" y="213" width="1" height="44" fill="#bcbcbc"/><rect x="197.67" y="213" width="1" height="44" fill="#bcbcbc"/><rect x="331.33" y="213" width="1" height="44" fill="#bcbcbc"/><rect x="465" y="213" width="1" height="44" fill="#bcbcbc"/><rect x="598.67" y="213" width="1" height="44" fill="#bcbcbc"/><rect x="732.34" y="213" width="1" height="44" fill="#bcbcbc"/><rect x="866" y="213" width="1" height="44" fill="#bcbcbc"/><rect x="999.67" y="213" width="1" height="44" fill="#bcbcbc"/><rect x="1133.34" y="213" width="1" height="44" fill="#bcbcbc"/><rect x="8" y="302.67" width="56.5" height="1" fill="#b9b9b9"/><rect x="8" y="348.33" width="56.5" height="1" fill="#b9b9b9"/><rect x="8" y="394" width="56.5" height="1" fill="#b9b9b9"/><rect x="8" y="439.67" width="56.5" height="1" fill="#b9b9b9"/><rect x="8" y="485.34" width="56.5" height="1" fill="#b9b9b9"/><rect x="8" y="531" width="56.5" height="1" fill="#b9b9b9"/><rect x="8" y="576.67" width="56.5" height="1" fill="#b9b9b9"/><rect x="8" y="622.34" width="56.5" height="1" fill="#b9b9b9"/><rect x="8" y="257" width="1222.2" height="1" fill="#a6a6a6"/><rect x="64" y="257" width="1" height="375.3" fill="#a6a6a6"/><rect x="465.2" y="256.4" width="134.27" height="1.6" fill="#217346"/><rect x="63.1" y="531.6" width="2" height="45.47" fill="#217346"/></svg><div class="t" style="left:122.35px;top:217.1px;font-size:27.5px;line-height:36px;color:#222;-webkit-text-stroke:0.6px #e6e6e6;">A</div><div class="t" style="left:255px;top:217.1px;font-size:27.5px;line-height:36px;color:#222;-webkit-text-stroke:0.6px #e6e6e6;">B</div><div class="t" style="left:388.7px;top:217.1px;font-size:27.5px;line-height:36px;color:#222;-webkit-text-stroke:0.6px #e6e6e6;">C</div><div class="t" style="left:522.1px;top:217.1px;font-size:27.5px;line-height:36px;color:#217346;-webkit-text-stroke:0.6px #d2d2d2;">D</div><div class="t" style="left:656.7px;top:217.1px;font-size:27.5px;line-height:36px;color:#222;-webkit-text-stroke:0.6px #e6e6e6;">E</div><div class="t" style="left:790.6px;top:217.1px;font-size:27.5px;line-height:36px;color:#222;-webkit-text-stroke:0.6px #e6e6e6;">F</div><div class="t" style="left:923.5px;top:217.1px;font-size:27.5px;line-height:36px;color:#222;-webkit-text-stroke:0.6px #e6e6e6;">G</div><div class="t" style="left:1057.3px;top:217.1px;font-size:27.5px;line-height:36px;color:#222;-webkit-text-stroke:0.6px #e6e6e6;">H</div><div class="t" style="left:1197px;top:217.1px;font-size:27.5px;line-height:36px;color:#222;-webkit-text-stroke:0.6px #e6e6e6;">I</div><div class="t" style="left:26.8px;top:262.3px;font-size:27.5px;line-height:36px;color:#222;-webkit-text-stroke:0.6px #e6e6e6;">1</div><div class="t" style="left:28.1px;top:308.3px;font-size:27.5px;line-height:36px;color:#222;-webkit-text-stroke:0.6px #e6e6e6;">2</div><div class="t" style="left:28.1px;top:353.9px;font-size:27.5px;line-height:36px;color:#222;-webkit-text-stroke:0.6px #e6e6e6;">3</div><div class="t" style="left:28.2px;top:399.5px;font-size:27.5px;line-height:36px;color:#222;-webkit-text-stroke:0.6px #e6e6e6;">4</div><div class="t" style="left:27.7px;top:445.1px;font-size:27.5px;line-height:36px;color:#222;-webkit-text-stroke:0.6px #e6e6e6;">5</div><div class="t" style="left:28.2px;top:490.9px;font-size:27.5px;line-height:36px;color:#222;-webkit-text-stroke:0.6px #e6e6e6;">6</div><div class="t" style="left:28.3px;top:536.5px;font-size:27.5px;line-height:36px;color:#217346;-webkit-text-stroke:0.6px #d2d2d2;">7</div><div class="t" style="left:28.2px;top:582.1px;font-size:27.5px;line-height:36px;color:#222;-webkit-text-stroke:0.6px #e6e6e6;">8</div><div class="t" style="left:89.57px;top:263.3px;font-size:27.5px;line-height:36px;color:#222;font-weight:300;transform:scaleX(1.015);">商品名</div><div class="t" style="left:238.43px;top:263.3px;font-size:27.5px;line-height:36px;color:#222;font-weight:300;transform:scaleX(0.974);">単価</div><div class="t" style="left:371.02px;top:263.3px;font-size:27.5px;line-height:36px;color:#222;font-weight:300;transform:scaleX(0.981);">数量</div><div class="t" style="left:504.42px;top:263.3px;font-size:27.5px;line-height:36px;color:#222;font-weight:300;transform:scaleX(0.981);">金額</div><div class="t" style="left:121.8px;top:308.3px;font-size:27.5px;line-height:36px;color:#222;-webkit-text-stroke:0.6px #fff;">A</div><div class="t" style="left:112.3px;top:353.9px;font-size:27.5px;line-height:36px;color:#222;-webkit-text-stroke:0.6px #fff;letter-spacing:1px;">BB</div><div class="t" style="left:121.3px;top:399.5px;font-size:27.5px;line-height:36px;color:#222;-webkit-text-stroke:0.6px #fff;">C</div><div class="t" style="left:120.8px;top:445.1px;font-size:27.5px;line-height:36px;color:#222;-webkit-text-stroke:0.6px #fff;">D</div><div class="t" style="left:121.8px;top:490.9px;font-size:27.5px;line-height:36px;color:#222;-webkit-text-stroke:0.6px #fff;">E</div><div class="t" style="left:284.13px;top:308.3px;font-size:27.5px;line-height:36px;color:#222;transform:scaleX(0.935);-webkit-text-stroke:0.6px #fff;">100</div><div class="t" style="left:283.45px;top:399.5px;font-size:27.5px;line-height:36px;color:#222;transform:scaleX(0.950);-webkit-text-stroke:0.6px #fff;">300</div><div class="t" style="left:284.13px;top:445.1px;font-size:27.5px;line-height:36px;color:#222;transform:scaleX(0.935);-webkit-text-stroke:0.6px #fff;">150</div><div class="t" style="left:282.46px;top:490.9px;font-size:27.5px;line-height:36px;color:#222;transform:scaleX(0.972);-webkit-text-stroke:0.6px #fff;">200</div><div class="t" style="left:230.4px;top:354.4px;font-size:27.5px;line-height:36px;color:#222;transform:scaleX(1.118);-webkit-text-stroke:0.6px #fff;">#N/A</div><div class="t" style="left:444.3px;top:308.3px;font-size:27.5px;line-height:36px;color:#222;-webkit-text-stroke:0.6px #fff;">2</div><div class="t" style="left:444.5px;top:353.9px;font-size:27.5px;line-height:36px;color:#222;-webkit-text-stroke:0.6px #fff;">5</div><div class="t" style="left:443.7px;top:399.5px;font-size:27.5px;line-height:36px;color:#222;-webkit-text-stroke:0.6px #fff;">1</div><div class="t" style="left:444.8px;top:445.1px;font-size:27.5px;line-height:36px;color:#222;-webkit-text-stroke:0.6px #fff;">4</div><div class="t" style="left:335.8px;top:491.9px;font-size:27.5px;line-height:36px;color:#222;font-weight:300;transform:scaleX(1.005);-webkit-text-stroke:0.6px #fff;">3<span style="-webkit-text-stroke:0">個</span></div><div class="t" style="left:371.6px;top:537.7px;font-size:27.5px;line-height:36px;color:#222;font-weight:300;">合計</div><div class="t" style="left:548.44px;top:308.3px;font-size:27.5px;line-height:36px;color:#222;transform:scaleX(0.981);-webkit-text-stroke:0.6px #e9eff9;">200</div><div class="t" style="left:549.44px;top:399.5px;font-size:27.5px;line-height:36px;color:#222;transform:scaleX(0.959);-webkit-text-stroke:0.6px #e9eff9;">300</div><div class="t" style="left:549.44px;top:445.1px;font-size:27.5px;line-height:36px;color:#222;transform:scaleX(0.959);-webkit-text-stroke:0.6px #e9eff9;">600</div><div class="t" style="left:497.6px;top:354.4px;font-size:27.5px;line-height:36px;color:#222;transform:scaleX(1.111);-webkit-text-stroke:0.6px #e9eff9;">#N/A</div><div class="t" style="left:475px;top:490.9px;font-size:27.5px;line-height:36px;color:#222;transform:scaleX(1.053);-webkit-text-stroke:0.6px #e9eff9;">#VALUE!</div><svg style="left:0;top:0" width="1258" height="688" viewBox="0 0 1258 688"><rect x="65" y="302.67" width="534.67" height="1" fill="#333"/><rect x="65" y="348.33" width="534.67" height="1" fill="#333"/><rect x="65" y="394" width="534.67" height="1" fill="#333"/><rect x="65" y="439.67" width="534.67" height="1" fill="#333"/><rect x="65" y="485.34" width="534.67" height="1" fill="#333"/><rect x="65" y="531" width="534.67" height="1" fill="#333"/><rect x="197.67" y="258" width="1" height="274" fill="#333"/><rect x="331.33" y="258" width="1" height="274" fill="#333"/><rect x="465" y="258" width="1" height="274" fill="#333"/><rect x="598.67" y="258" width="1" height="45.67" fill="#333"/><rect x="331.33" y="531" width="1" height="46.67" fill="#333"/><rect x="331.33" y="576.67" width="134.67" height="1" fill="#333"/><rect x="466" y="532.2" width="318.2" height="44.27" fill="#fff"/><rect x="464.7" y="302.67" width="1.6" height="229.33" fill="#4a7ad0"/><rect x="598.37" y="302.67" width="1.6" height="229.33" fill="#4a7ad0"/><rect x="465" y="302.07" width="134.67" height="1.9" fill="#3f6dc4"/><rect x="465" y="530.4" width="134.67" height="1.6" fill="#3f6dc4"/><rect x="462.7" y="300.27" width="5.6" height="5.6" fill="#fff"/><rect x="463.45" y="301.07" width="4.1" height="4" fill="#2f5cb0"/><rect x="596.37" y="300.27" width="5.6" height="5.6" fill="#fff"/><rect x="597.12" y="301.07" width="4.1" height="4" fill="#2f5cb0"/><rect x="462.7" y="528.6" width="5.6" height="5.6" fill="#fff"/><rect x="463.45" y="529.4" width="4.1" height="4" fill="#2f5cb0"/><rect x="596.37" y="528.6" width="5.6" height="5.6" fill="#fff"/><rect x="597.12" y="529.4" width="4.1" height="4" fill="#2f5cb0"/><rect x="465" y="531.6" width="131.4" height="1.6" fill="#217346"/><rect x="465" y="575.87" width="131.4" height="2" fill="#217346"/><rect x="465" y="531.6" width="2" height="46.27" fill="#217346"/><rect x="597.2" y="576.27" width="4" height="3.6" fill="#217346"/><path d="M466 349.33 h11 l-11 10 Z" fill="#1c7c33"/><path d="M466 486.34 h11 l-11 10 Z" fill="#1c7c33"/><rect x="782.4" y="531.6" width="1.2" height="44.4" fill="#111"/></svg><div class="t" style="left:469.37px;top:534px;font-size:27.5px;line-height:36px;color:#1a1a1a;transform:scaleX(1.013);-webkit-text-stroke:0.6px #fff;">=SUM(IFERROR<span style="color:#c9504c">(</span><span style="color:#4472c4">D2:D6</span>,<span style="color:#c9504c;margin-left:5px">)</span></div><div class="a" style="left:565.4px;top:579px;width:185px;height:18.6px;background:#fff;border:1px solid #9c9c9c;border-radius:4.5px;box-shadow:2px 5px 11px rgba(0,0,0,0.24)"></div><div class="t" style="left:570.89px;top:580.7px;font-size:10.5px;line-height:14px;color:#666;transform:scaleX(1.108);">IFERROR(値, <b style="color:#444">エラーの場合の値</b>)</div><svg style="left:580px;top:380px" width="150" height="100" viewBox="0 0 150 100"><path d="M11 11 L140 86" stroke="#e8000d" stroke-width="1.7"/><circle cx="11" cy="11" r="3.4" fill="#e8000d"/></svg><svg style="left:716px;top:417px" width="362" height="100" viewBox="716 417 362 100"><rect x="719.7" y="420.7" width="352.8" height="91.2" fill="#fff" stroke="#ea0a0f" stroke-width="3.4"/></svg><div class="t" style="left:739.58px;top:420.2px;font-size:35px;line-height:46px;color:#ea0a0f;font-weight:700;transform:scaleX(1.012);">セル範囲を選択して</div><div class="t" style="left:740.59px;top:465.7px;font-size:35px;line-height:46px;color:#ea0a0f;font-weight:700;transform:scaleX(1.007);">半角カンマを入力</div><div class="a" style="left:1230.4px;top:212px;width:21px;height:420.4px;background:#e8e8e8"></div><div class="a" style="left:1229.6px;top:212px;width:1px;height:420px;background:#c9c9c9"></div><div class="a" style="left:1232.6px;top:229px;width:15.2px;height:389px;background:#f0f0f0"></div><div class="a" style="left:1232.6px;top:229px;width:15.2px;height:156px;background:#fff;border:1px solid #b4b4b4"></div><div class="a" style="left:1232.6px;top:215.4px;width:15.2px;height:14.6px;background:#fff;border:1px solid #c2c2c2"></div><svg style="left:1236.4px;top:220.6px" width="7.6" height="4.4" viewBox="0 0 7.6 4.4"><path d="M0 4.4 L3.8 0 L7.6 4.4 Z" fill="#111"/></svg><div class="a" style="left:1232.6px;top:617.4px;width:15.2px;height:15px;background:#fff;border:1px solid #c2c2c2"></div><svg style="left:1236.4px;top:623px" width="7.6" height="4.4" viewBox="0 0 7.6 4.4"><path d="M0 0 L3.8 4.4 L7.6 0 Z" fill="#111"/></svg><div class="a" style="left:0;top:632.2px;width:1258px;height:25.4px;background:#e6e6e6"></div><div class="a" style="left:8px;top:632.2px;width:1223px;height:1px;background:#a6a6a6"></div><svg style="left:31.6px;top:641.6px" width="4.4" height="7" viewBox="0 0 4.4 7"><path d="M4.4 0 L0 3.5 L4.4 7 Z" fill="#c0c0c0"/></svg><svg style="left:57.4px;top:641.6px" width="4.4" height="7" viewBox="0 0 4.4 7"><path d="M0 0 L4.4 3.5 L0 7 Z" fill="#c0c0c0"/></svg><div class="a" style="left:97.6px;top:636px;width:1px;height:18.4px;background:#b5b5b5"></div><div class="a" style="left:167.4px;top:636px;width:1px;height:18.4px;background:#b5b5b5"></div><div class="a" style="left:237.4px;top:636px;width:1px;height:18.4px;background:#b5b5b5"></div><div class="a" style="left:309px;top:632px;width:70px;height:22.4px;background:#fff;border-left:1px solid #b0b0b0;border-right:1px solid #b0b0b0"></div><div class="a" style="left:309px;top:652.8px;width:70px;height:1.8px;background:#217346"></div><div class="t" style="left:107.95px;top:635.3px;font-size:14.5px;line-height:19px;color:#5e5e5e;transform:scaleX(1.049);">Sheet1</div><div class="t" style="left:177.95px;top:635.3px;font-size:14.5px;line-height:19px;color:#5e5e5e;transform:scaleX(1.049);">Sheet2</div><div class="t" style="left:247.95px;top:635.3px;font-size:14.5px;line-height:19px;color:#5e5e5e;transform:scaleX(1.049);">Sheet3</div><div class="t" style="left:318.96px;top:635.2px;font-size:14.5px;line-height:19px;color:#217346;transform:scaleX(1.036);">Sheet4</div><svg style="left:409.8px;top:637.7px" width="15.4" height="15.4" viewBox="0 0 15.4 15.4"><circle cx="7.7" cy="7.7" r="7" fill="none" stroke="#6a6a6a" stroke-width="1.1"/><path d="M7.7 4 V11.4 M4 7.7 H11.4" stroke="#6a6a6a" stroke-width="1.1"/></svg><svg style="left:752.6px;top:639.6px" width="2" height="12" viewBox="0 0 2 12"><g fill="#b0b0b0"><rect width="1.6" height="1.6"/><rect y="4.4" width="1.6" height="1.6"/><rect y="8.8" width="1.6" height="1.6"/></g></svg><div class="a" style="left:768.2px;top:637.4px;width:14.4px;height:15px;background:#fff;border:1px solid #c2c2c2"></div><svg style="left:773.4px;top:641.2px" width="4.4" height="7.6" viewBox="0 0 4.4 7.6"><path d="M4.4 0 L0 3.8 L4.4 7.6 Z" fill="#111"/></svg><div class="a" style="left:783.6px;top:637.4px;width:432px;height:15px;background:#f0f0f0"></div><div class="a" style="left:783.6px;top:637.4px;width:377px;height:15px;background:#fff;border:1px solid #b4b4b4"></div><div class="a" style="left:1215px;top:637.4px;width:15px;height:15px;background:#fff;border:1px solid #c2c2c2"></div><svg style="left:1220.6px;top:641.2px" width="4.4" height="7.6" viewBox="0 0 4.4 7.6"><path d="M0 0 L4.4 3.8 L0 7.6 Z" fill="#111"/></svg><div class="a" style="left:0;top:657.6px;width:1258px;height:24px;background:#f3f3f3"></div><div class="t" style="left:18.9px;top:662.1px;font-size:11.5px;line-height:15px;color:#444;transform:scaleX(1.095);">入力</div><svg style="left:65px;top:662.4px" width="12" height="11.6" viewBox="0 0 12 11.6"><rect x="0.5" y="2" width="11" height="9" fill="none" stroke="#7a7a7a" stroke-width="1"/><rect x="0.5" y="2" width="11" height="2.4" fill="#7a7a7a"/><circle cx="2.6" cy="2.4" r="2.2" fill="#555"/><path d="M2.4 6.4 H9.6 M2.4 8.6 H9.6" stroke="#9a9a9a" stroke-width="1" stroke-dasharray="1.4 1"/></svg><svg style="left:95.4px;top:661.6px" width="16" height="14" viewBox="0 0 16 14"><path d="M5.6 1 A5.4 5.4 0 1 0 5.6 11.8" fill="none" stroke="#555" stroke-width="1" stroke-dasharray="2.2 1.3"/><circle cx="9.4" cy="3.4" r="1.2" fill="#333"/><path d="M5.8 5.4 H13 M9.4 5.4 V8 M9.4 8 L6.6 12.6 M9.4 8 L14.2 12.8" fill="none" stroke="#333" stroke-width="1.2"/></svg><div class="t" style="left:112.88px;top:662.1px;font-size:11.5px;line-height:15px;color:#333;font-weight:700;transform:scaleX(0.922);">アクセシビリティ: 検討が必要です</div><svg style="left:847px;top:662px" width="17" height="14" viewBox="0 0 17 14"><rect x="0.5" y="0.5" width="13" height="9" fill="#555" stroke="#444"/><circle cx="11.8" cy="9.6" r="3.6" fill="#f3f3f3"/><circle cx="11.8" cy="9.6" r="2.2" fill="none" stroke="#444" stroke-width="1.6" stroke-dasharray="1.3 1"/></svg><div class="t" style="left:864.8px;top:661.6px;font-size:12px;line-height:16px;color:#333;transform:scaleX(0.983);">表示設定</div><svg style="left:948.6px;top:661.6px" width="12.4" height="12.4" viewBox="0 0 12.4 12.4"><path d="M0.5 0.5 H11.9 V11.9 H0.5 Z M0.5 4.3 H11.9 M0.5 8.1 H11.9 M4.3 0.5 V11.9 M8.1 0.5 V11.9" fill="none" stroke="#777" stroke-width="1"/></svg><svg style="left:985.6px;top:661.6px" width="12.4" height="12.4" viewBox="0 0 12.4 12.4"><path d="M0.5 0.5 H11.9 V11.9 H0.5 Z M3 3 H9.4 V9.4 H3 Z" fill="none" stroke="#777" stroke-width="1"/><path d="M4.4 5 H8 M4.4 7 H8" stroke="#777" stroke-width="0.8"/></svg><svg style="left:1026.4px;top:661.6px" width="12.4" height="12.4" viewBox="0 0 12.4 12.4"><path d="M0.5 0.5 H11.9 V11.9 H0.5 Z M4.4 0.5 V6.4 H8 V0.5" fill="none" stroke="#777" stroke-width="1"/></svg><div class="a" style="left:1059.6px;top:668px;width:6.4px;height:1px;background:#999"></div><div class="a" style="left:1071.8px;top:668px;width:98.4px;height:1px;background:#777"></div><div class="a" style="left:1120.4px;top:665px;width:1.4px;height:7px;background:#666"></div><svg style="left:1176.6px;top:664.4px" width="8" height="8" viewBox="0 0 8 8"><path d="M4 0 V8 M0 4 H8" stroke="#aaa" stroke-width="1"/></svg><div class="t" style="left:1195.76px;top:661.1px;font-size:12.5px;line-height:16px;color:#b0b0b0;transform:scaleX(1.039);">190%</div>
</div></div>
<div id="frame"></div>
</body>
</html>
